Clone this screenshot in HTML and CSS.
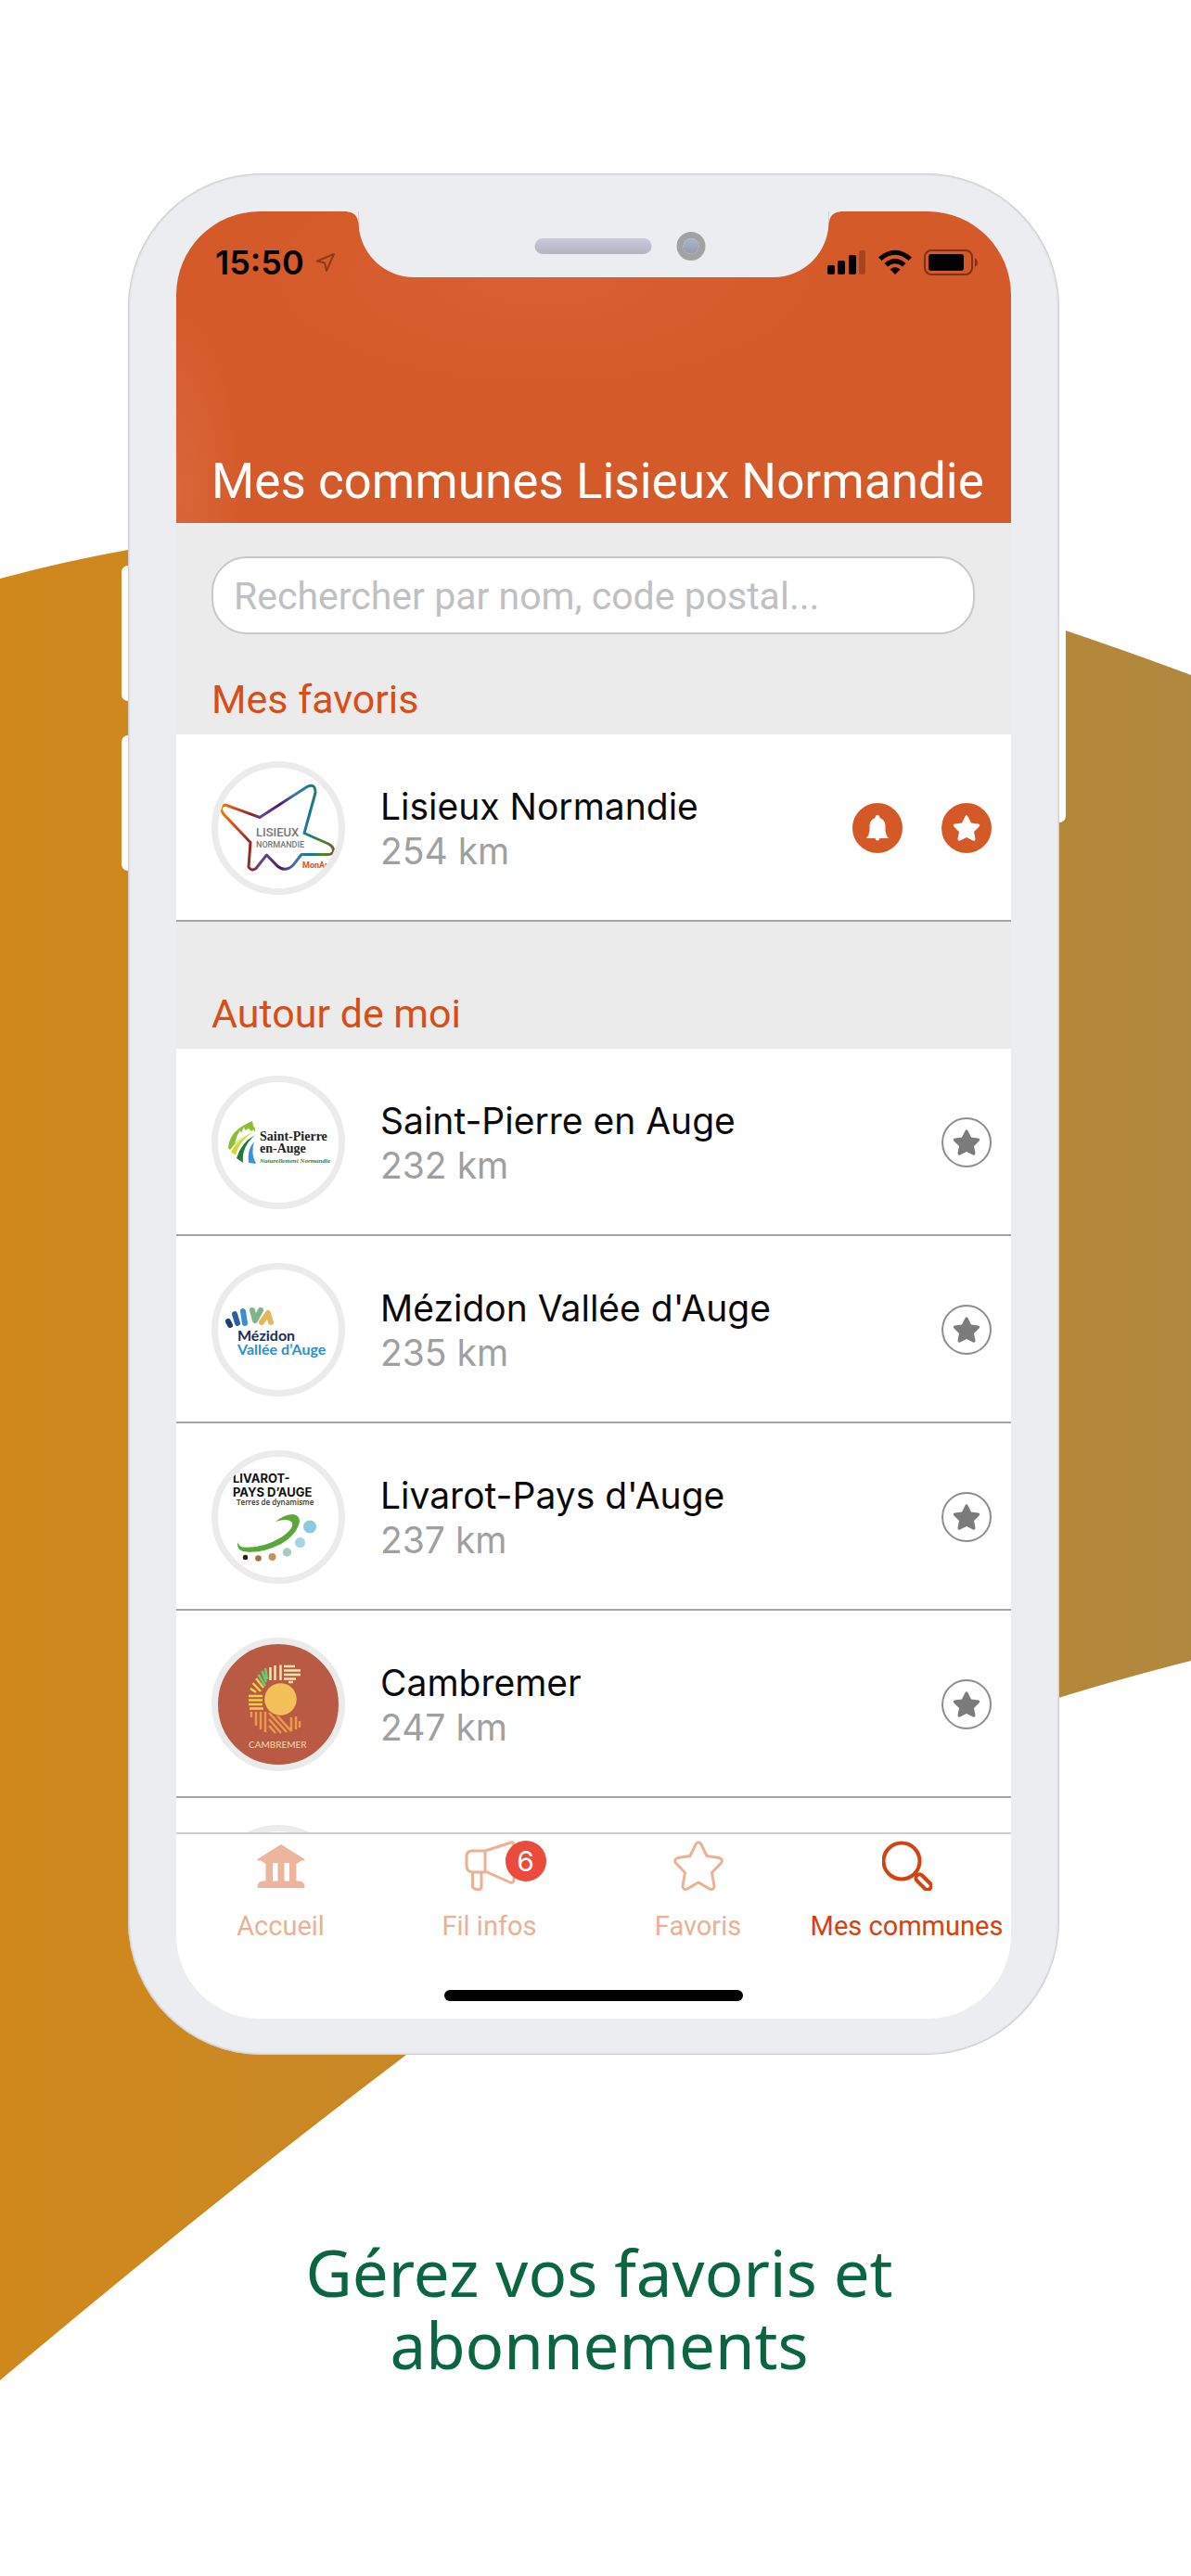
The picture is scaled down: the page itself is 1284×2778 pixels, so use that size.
FILE: index.html
```
<!DOCTYPE html>
<html lang="fr">

<head>
    <meta charset="UTF-8">
    <meta name="viewport" content="width=device-width, initial-scale=1.0">
    <title>Mes communes Lisieux Normandie</title>
    <link rel="stylesheet" href="styles.css">
</head>

<body>
    <div class="poster">
        <svg class="backdrop" viewBox="0 0 1284 2778" preserveAspectRatio="none" aria-hidden="true">
            <defs>
                <linearGradient id="gold" x1="0" x2="1" y1="0" y2="0">
                    <stop offset="0" stop-color="#d0881c" />
                    <stop offset=".12" stop-color="#ce881f" />
                    <stop offset="1" stop-color="#b1883f" />
                </linearGradient>
            </defs>
            <path fill="url(#gold)" d="M0 624Q70 605 138 593C500 540 860 565 1149 680Q1220 704 1284 728V1791Q1210 1810 1141 1831C880 1905 640 2050 438 2216Q215 2385 0 2567Z" />
        </svg>

        <div class="phone">
            <span class="side-key key-up"></span>
            <span class="side-key key-down"></span>
            <span class="side-key key-power"></span>

            <div class="screen">
                <div class="notch">
                    <span class="speaker"></span>
                    <span class="camera"></span>
                </div>

                <header class="header">
                    <div class="status">
                        <span class="time">15:50</span>
                        <svg class="location" width="22" height="22" viewBox="0 0 22 22">
                            <path d="M20 2L2 9.500L10 11.500L12 20Z" fill="none" stroke="#8f3a17" stroke-width="2" stroke-linejoin="round" />
                        </svg>
                        <svg class="signal" width="42" height="28" viewBox="0 0 42 28">
                            <rect x="0" y="17" width="8" height="10" rx="2" />
                            <rect x="11" y="12" width="8" height="15" rx="2" />
                            <rect x="23" y="6" width="8" height="21" rx="2" />
                            <rect x="34" y="1" width="7" height="26" rx="2" fill="#a9451e" />
                        </svg>
                        <svg width="38" height="28" viewBox="0 0 38 28">
                            <path d="M1 8.500Q19-7 37 8.500L33.500 12Q19-.5 4.500 12Z" />
                            <path d="M7.500 15Q19 5 30.500 15L27 18.500Q19 12 11 18.500Z" />
                            <path d="M13.500 21.500Q19 17 24.500 21.500L19 27Z" />
                        </svg>
                        <svg width="60" height="28" viewBox="0 0 60 28">
                            <rect x="1" y="1" width="51" height="26" rx="7" fill="none" stroke="#7c3214" stroke-width="2" />
                            <rect x="5" y="5" width="38" height="18" rx="3" />
                            <path d="M55 9Q58 11 58 14T55 19Z" fill="#7c3214" />
                        </svg>
                    </div>
                    <h1>Mes communes Lisieux Normandie</h1>
                </header>

                <main class="content">
                    <form class="search">
                        <input type="search" aria-label="Rechercher une commune" placeholder="Rechercher par nom, code postal...">
                    </form>

                    <h2>Mes favoris</h2>
                    <ul class="list">
                        <li class="row">
                            <svg class="logo" viewBox="0 0 130 130">
                                <defs>
                                    <linearGradient id="rainbow" x1="0" x2="1" y1="0" y2="0">
                                        <stop offset="0" stop-color="#ee8200" />
                                        <stop offset=".12" stop-color="#d64a1c" />
                                        <stop offset=".27" stop-color="#8c2626" />
                                        <stop offset=".37" stop-color="#5c4c94" />
                                        <stop offset=".52" stop-color="#57155f" />
                                        <stop offset=".65" stop-color="#4078ae" />
                                        <stop offset=".8" stop-color="#16788c" />
                                        <stop offset=".9" stop-color="#4c8628" />
                                        <stop offset="1" stop-color="#74583a" />
                                    </linearGradient>
                                </defs>
                                <path fill="none" stroke="url(#rainbow)" stroke-width="3" stroke-linejoin="round" d="M8 40L45 53.500L96 20.500Q105 16 105 27L93 70.500L119 82Q126 86 124 91Q122 94 117 93.500H90L81 105Q73 113 64 106L52.500 94L41 108.500Q36 112 33 107L35 80.500L6 50Q0 42 8 40Z" />
                                <text x="41" y="74" font-family="Liberation Sans Narrow, Roboto, sans-serif" font-size="13" font-weight="500" fill="#777">LISIEUX</text>
                                <text x="41" y="86" font-family="Liberation Sans Narrow, Roboto, sans-serif" font-size="9" font-weight="500" fill="#777">NORMANDIE</text>
                                <text x="91" y="108" font-family="Roboto, sans-serif" font-size="9" font-weight="700" fill="#dd4f1c">MonAr</text>
                            </svg>
                            <div class="infos">
                                <h3>Lisieux Normandie</h3>
                                <p>254 km</p>
                            </div>
                            <button class="round on" type="button" aria-label="Notifications">
                                <svg width="30" height="30" viewBox="0 0 30 30"><path d="M15 1Q17.500 1 17.500 4Q23 6 23.500 12V18Q24 23 27 26H17.500Q17 28.500 15 28.500T12.500 26H3Q6 23 6.500 18V12Q7 6 12.500 4Q12.500 1 15 1Z" /></svg>
                            </button>
                            <button class="round on" type="button" aria-label="Retirer des favoris">
                                <svg width="30" height="30" viewBox="0 0 30 30"><use href="#star" /></svg>
                            </button>
                        </li>
                    </ul>

                    <h2 class="around">Autour de moi</h2>
                    <ul class="list">
                        <li class="row">
                            <svg class="logo" viewBox="0 0 130 130">
                                <path fill="#8cbd33" d="M11 71Q12 52 37 42L38 47L40 50L40 53Q24 58 13 73Z" />
                                <path fill="#fff" d="M21 57L24 52L25 55L28 48L29 52L33 50L36 53L39 51V54Q28 57 18 66Z" />
                                <path fill="#cfd83a" d="M40 53Q22 60 14 75L19 79Q24 61 40 53Z" />
                                <path fill="#217a35" d="M40 57Q25 65 20 82L27 87Q25 70 40 57Z" />
                                <path fill="#3b93cf" d="M39 64Q31 73 33 87L41 88Q35 77 39 64Z" />
                                <text x="45" y="63" font-family="Liberation Serif, serif" font-size="14" font-weight="700" fill="#222">Saint-Pierre</text>
                                <text x="45" y="76" font-family="Liberation Serif, serif" font-size="14" font-weight="700" fill="#222">en-Auge</text>
                                <text x="45" y="87" font-family="Liberation Serif, serif" font-size="7" font-style="italic" font-weight="700" fill="#1d8644">Naturellement Normandie</text>
                            </svg>
                            <div class="infos">
                                <h3>Saint-Pierre en Auge</h3>
                                <p>232 km</p>
                            </div>
                            <button class="round" type="button" aria-label="Ajouter aux favoris">
                                <svg width="30" height="30" viewBox="0 0 30 30"><path id="star" d="M13.500 2.500Q15 0 16.500 2.500L20 9.500L27.500 10.500Q30.500 11 28.500 13.500L23 19L24.500 26.500Q24.500 29.500 22 28.500L15 25L8 28.500Q5.500 29.500 5.500 26.500L7 19L1.500 13.500Q-.5 11 2.500 10.500L10 9.500Z" /></svg>
                            </button>
                        </li>
                        <li class="row">
                            <svg class="logo" viewBox="0 0 130 130">
                                <g fill="none" stroke-width="6" stroke-linecap="round" stroke-linejoin="round">
                                    <path stroke="#1f3d73" d="M13 60L11 56" />
                                    <path stroke="#2b5f9f" d="M21 58L18 48" />
                                    <path stroke="#3a8fca" d="M29 58L27 45" />
                                    <path stroke="#7eb48c" d="M37 44L40 55L46 44" />
                                    <path stroke="#e5b75c" d="M47 57L54 47L57 57" />
                                </g>
                                <text x="21" y="77" font-family="Lato, sans-serif" font-size="16" font-weight="700" fill="#1b2c5e">Mézidon</text>
                                <text x="21" y="92" font-family="Lato, sans-serif" font-size="16" font-weight="700" fill="#2f90c6">Vallée d’Auge</text>
                            </svg>
                            <div class="infos">
                                <h3>Mézidon Vallée d'Auge</h3>
                                <p>235 km</p>
                            </div>
                            <button class="round" type="button" aria-label="Ajouter aux favoris">
                                <svg width="30" height="30" viewBox="0 0 30 30"><use href="#star" /></svg>
                            </button>
                        </li>
                        <li class="row">
                            <svg class="logo" viewBox="0 0 130 130">
                                <text x="16" y="28" font-family="Inter, sans-serif" font-size="13" font-weight="700" fill="#111">LIVAROT-</text>
                                <text x="16" y="43" font-family="Inter, sans-serif" font-size="13" font-weight="700" fill="#111">PAYS D’AUGE</text>
                                <text x="20" y="52" font-family="Open Sans, sans-serif" font-size="8" font-weight="600" fill="#333">Terres de dynamisme</text>
                                <path fill="#5aa83a" d="M62 70Q72 62 81 62Q88 63 88 70Q85 84 68 94Q48 104 31 102.500Q20 102 21 92Q23 97 27 97.500Q48 99 68 87Q84 76 79 70Q74 66 62 70Z" />
                                <circle cx="99" cy="75.500" r="7" fill="#8cc8e0" />
                                <circle cx="88.500" cy="92.500" r="5.500" fill="#a6d6e4" />
                                <circle cx="74.500" cy="103" r="4.700" fill="#a7ccc0" />
                                <circle cx="58.500" cy="108" r="4" fill="#c0935a" />
                                <circle cx="43.500" cy="109.500" r="3.300" fill="#a46f3c" />
                                <circle cx="29.500" cy="108.500" r="2.700" fill="#35180f" />
                            </svg>
                            <div class="infos">
                                <h3>Livarot-Pays d'Auge</h3>
                                <p>237 km</p>
                            </div>
                            <button class="round" type="button" aria-label="Ajouter aux favoris">
                                <svg width="30" height="30" viewBox="0 0 30 30"><use href="#star" /></svg>
                            </button>
                        </li>
                        <li class="row">
                            <svg class="logo brick" viewBox="0 0 130 130">
                                <g fill="none" stroke-width="2.500">
                                    <path stroke="#f6e3ae" d="M56.500 25V39M61.500 23V39M67.500 22.500V39M71 24H83M71 28.500H89M71 33H89M71 37.500H84M76 41H81" />
                                    <path stroke="#5fd073" d="M51 26L53 38M47.500 29L52 41M43.500 33L51 45" />
                                    <path stroke="#f1cf4d" d="M41 37L49 47M37.500 42L46 51M35 48L41 52M33 56H48M33 60.500H48M33 65H48M34 69.500H49" />
                                    <path stroke="#eb9b49" d="M36 73V79M41 73V88M46 73V92M51 73V95M55 74L74 95M55 81L68 96M55 88L62 96M62 75L79 94M79 79V94M84 78V92M88 83V90" />
                                </g>
                                <circle cx="67.500" cy="59.500" r="18.500" fill="#b95a44" />
                                <circle cx="67.500" cy="59.500" r="17.300" fill="#f3c05a" />
                                <text x="33" y="112" font-family="Lato, sans-serif" font-size="10" fill="#f6dca6">CAMBREMER</text>
                            </svg>
                            <div class="infos">
                                <h3>Cambremer</h3>
                                <p>247 km</p>
                            </div>
                            <button class="round" type="button" aria-label="Ajouter aux favoris">
                                <svg width="30" height="30" viewBox="0 0 30 30"><use href="#star" /></svg>
                            </button>
                        </li>
                        <li class="row">
                            <svg class="logo" viewBox="0 0 130 130"></svg>
                        </li>
                    </ul>
                </main>

                <nav class="tabs">
                    <a class="tab" href="#">
                        <svg width="54" height="54" viewBox="0 0 54 54">
                            <path fill="#ecb59c" fill-rule="evenodd" d="M27 4L52.500 20V21.500H49L43.500 25V43.500H47Q52.500 44 52.500 51H1.500Q1.500 44 7 43.500H10.500V25L5 21.500H1.500V20ZM18 24V43.500H23.500V24ZM30.500 24V43.500H36V24Z" />
                        </svg>
                        Accueil
                    </a>
                    <a class="tab" href="#">
                        <span class="tab-icon">
                            <svg width="54" height="54" viewBox="0 0 54 54" fill="none" stroke="#ecb094" stroke-width="3" stroke-linejoin="round">
                                <path d="M22 11V34H8Q2 33 2 27V17Q2 11 8 11ZM22 11L50 2Q53 1 53 5V42Q53 46 49 45L22 33M8.500 34V50L11 52L16 53L18 51V34" />
                            </svg>
                            <span class="badge">6</span>
                        </span>
                        Fil infos
                    </a>
                    <a class="tab" href="#">
                        <svg width="54" height="54" viewBox="0 0 54 54" fill="none" stroke="#ecb094" stroke-width="3" stroke-linejoin="round">
                            <path d="M24 4Q27-.5 30 4L36 16.500L49 18.500Q54 20 51.500 24L41.500 34.500L44 49Q43.500 53.500 39 52L27 45L15 52Q10.500 53.500 10 49L12.500 34.500L2.500 24Q0 20 5 18.500L18 16.500Z" />
                        </svg>
                        Favoris
                    </a>
                    <a class="tab current" href="#">
                        <svg width="54" height="54" viewBox="0 0 54 54" fill="none" stroke="#d2430f" stroke-width="4">
                            <circle cx="21" cy="22" r="19.500" />
                            <rect x="-4" y="0" width="8" height="20" rx="4" transform="translate(37.500 37.500) rotate(-45)" />
                        </svg>
                        Mes communes
                    </a>
                </nav>
                <div class="home-bar"></div>
            </div>
        </div>

        <p class="caption">Gérez vos favoris et abonnements</p>
    </div>
</body>

</html>
```
FILE: styles.css
```
* {
    box-sizing: border-box;
    margin: 0;
    padding: 0;
}

body {
    background: #fff;
    font-family: Roboto, sans-serif;
}

ul {
    list-style: none;
}

.poster {
    position: relative;
    display: flex;
    flex-direction: column;
    align-items: center;
    min-height: 100vh;
    padding: 187px 4px 0 0;
}

.backdrop {
    position: absolute;
    top: 0;
    left: 0;
    width: 100%;
    height: 100%;
}

/* phone */
.phone {
    position: relative;
    width: 100%;
    max-width: 1004px;
    aspect-ratio: 1004 / 2029;
    padding: 41px 52px 39px;
    background: #ecedf1;
    border-radius: 144px;
    box-shadow: inset 0 0 2px 1px #c4c4c8;
}

.side-key {
    position: absolute;
    left: -7px;
    width: 7px;
    height: 146px;
    background: #fdfdfd;
    border-radius: 7px 0 0 7px;
}

.key-up {
    top: 423px;
}

.key-down {
    top: 606px;
}

.key-power {
    top: 474px;
    left: 100%;
    height: 226px;
    border-radius: 0 7px 7px 0;
}

.screen {
    position: relative;
    display: flex;
    flex-direction: column;
    height: 100%;
    background: #fff;
    border-radius: 90px;
    overflow: hidden;
}

.notch {
    position: absolute;
    top: 0;
    left: 50%;
    width: 507px;
    height: 71px;
    transform: translateX(-50%);
    background: #ecedf1;
    border-radius: 0 0 60px 60px;
}

.notch::before,
.notch::after {
    content: "";
    position: absolute;
    top: 0;
    right: 100%;
    width: 12px;
    height: 12px;
    background: radial-gradient(circle at 0 100%, transparent 11px, #ecedf1 12px);
}

.notch::after {
    right: auto;
    left: 100%;
    background: radial-gradient(circle at 100% 100%, transparent 11px, #ecedf1 12px);
}

.speaker {
    position: absolute;
    top: 29px;
    left: 190px;
    width: 126px;
    height: 17px;
    border-radius: 9px;
    background: linear-gradient(#cac8dc, #b5b4c0);
}

.camera {
    position: absolute;
    top: 22px;
    right: 133px;
    width: 31px;
    height: 31px;
    border: 7px solid #a2a2a2;
    border-radius: 50%;
    background: linear-gradient(#a9b7cc, #929bb0) padding-box;
}

/* header */
.header {
    display: flex;
    flex-direction: column;
    justify-content: space-between;
    min-height: 336px;
    padding: 33px 34px 13px 38px;
    color: #fff;
    background:
        radial-gradient(ellipse 70px 200px at 0 90%, #d9673b, transparent),
        radial-gradient(ellipse 320px 130px at 44% 20%, #d86034, transparent),
        #d55a29;
}

.status {
    display: flex;
    align-items: center;
    gap: 12px;
    height: 44px;
    padding-left: 4px;
    color: #000;
}

.time {
    font: 600 36px/44px Inter, sans-serif;
}

.signal {
    margin-left: auto;
}

h1 {
    font-size: 53px;
    font-weight: 400;
    line-height: 64px;
    white-space: nowrap;
}

/* list of communes */
.content {
    flex: 1;
    min-height: 0;
    overflow: hidden;
    background: #ebebeb;
}

.search {
    padding: 36px 39px 0 38px;
}

.search input {
    display: block;
    width: 100%;
    height: 84px;
    padding: 2px 22px 0;
    font: 41px/48px Roboto, sans-serif;
    background: #fff;
    border: 2px solid #c8c8c8;
    border-radius: 38px;
    outline: none;
    appearance: none;
}

.search input::placeholder {
    color: #bfc0c2;
    opacity: 1;
}

h2 {
    padding: 44px 38px 12px;
    color: #d84e17;
    font-size: 43px;
    font-weight: 400;
    line-height: 52px;
}

.around {
    padding-top: 73px;
}

.row {
    display: flex;
    align-items: center;
    gap: 38px;
    height: 202px;
    padding: 2px 21px 0 38px;
    background: #fff;
    border-bottom: 2px solid #a4a4a4;
}

.logo {
    flex: none;
    width: 144px;
    height: 144px;
    border: 7px solid #ebebeb;
    border-radius: 50%;
    overflow: hidden;
}

.brick {
    background: #b95a44;
}

.infos {
    flex: 1;
    padding-top: 2px;
    font-family: Inter, sans-serif;
    font-size: 39px;
    line-height: 48px;
}

.infos h3 {
    font-size: 39px;
    font-weight: 400;
    color: #0a0a0a;
}

.infos p {
    color: #a0a0a0;
}

.round {
    display: flex;
    align-items: center;
    justify-content: center;
    width: 54px;
    height: 54px;
    background: #fff;
    border: 2px solid #8c8c8c;
    border-radius: 50%;
    fill: #7b7b7b;
}

.round + .round {
    margin-left: 4px;
}

.round.on {
    background: #d55827;
    border-color: #d55827;
    fill: #fff;
}

/* bottom tabs */
.tabs {
    display: flex;
    border-top: 2px solid #cfcfcf;
    padding-top: 7px;
}

.tab {
    display: flex;
    flex: 1 1 0;
    flex-direction: column;
    align-items: center;
    gap: 20px;
    min-width: 0;
    color: #ecb094;
    font-size: 29px;
    line-height: 36px;
    text-decoration: none;
    white-space: nowrap;
}

.current {
    color: #d2430f;
}

.tab-icon {
    position: relative;
    height: 54px;
}

.badge {
    position: absolute;
    top: 0;
    right: -34px;
    width: 44px;
    height: 44px;
    border-radius: 50%;
    background: #ea4b3a;
    color: #fff;
    font: 30px/44px Inter, sans-serif;
    text-align: center;
}

.home-bar {
    width: 322px;
    height: 12px;
    margin: 51px auto 19px;
    border-radius: 6px;
    background: #000;
}

.caption {
    position: relative;
    max-width: 700px;
    padding: 195px 0 0 12px;
    color: #0b6541;
    font: 69px/78px "Noto Sans", sans-serif;
    text-align: center;
}
```
